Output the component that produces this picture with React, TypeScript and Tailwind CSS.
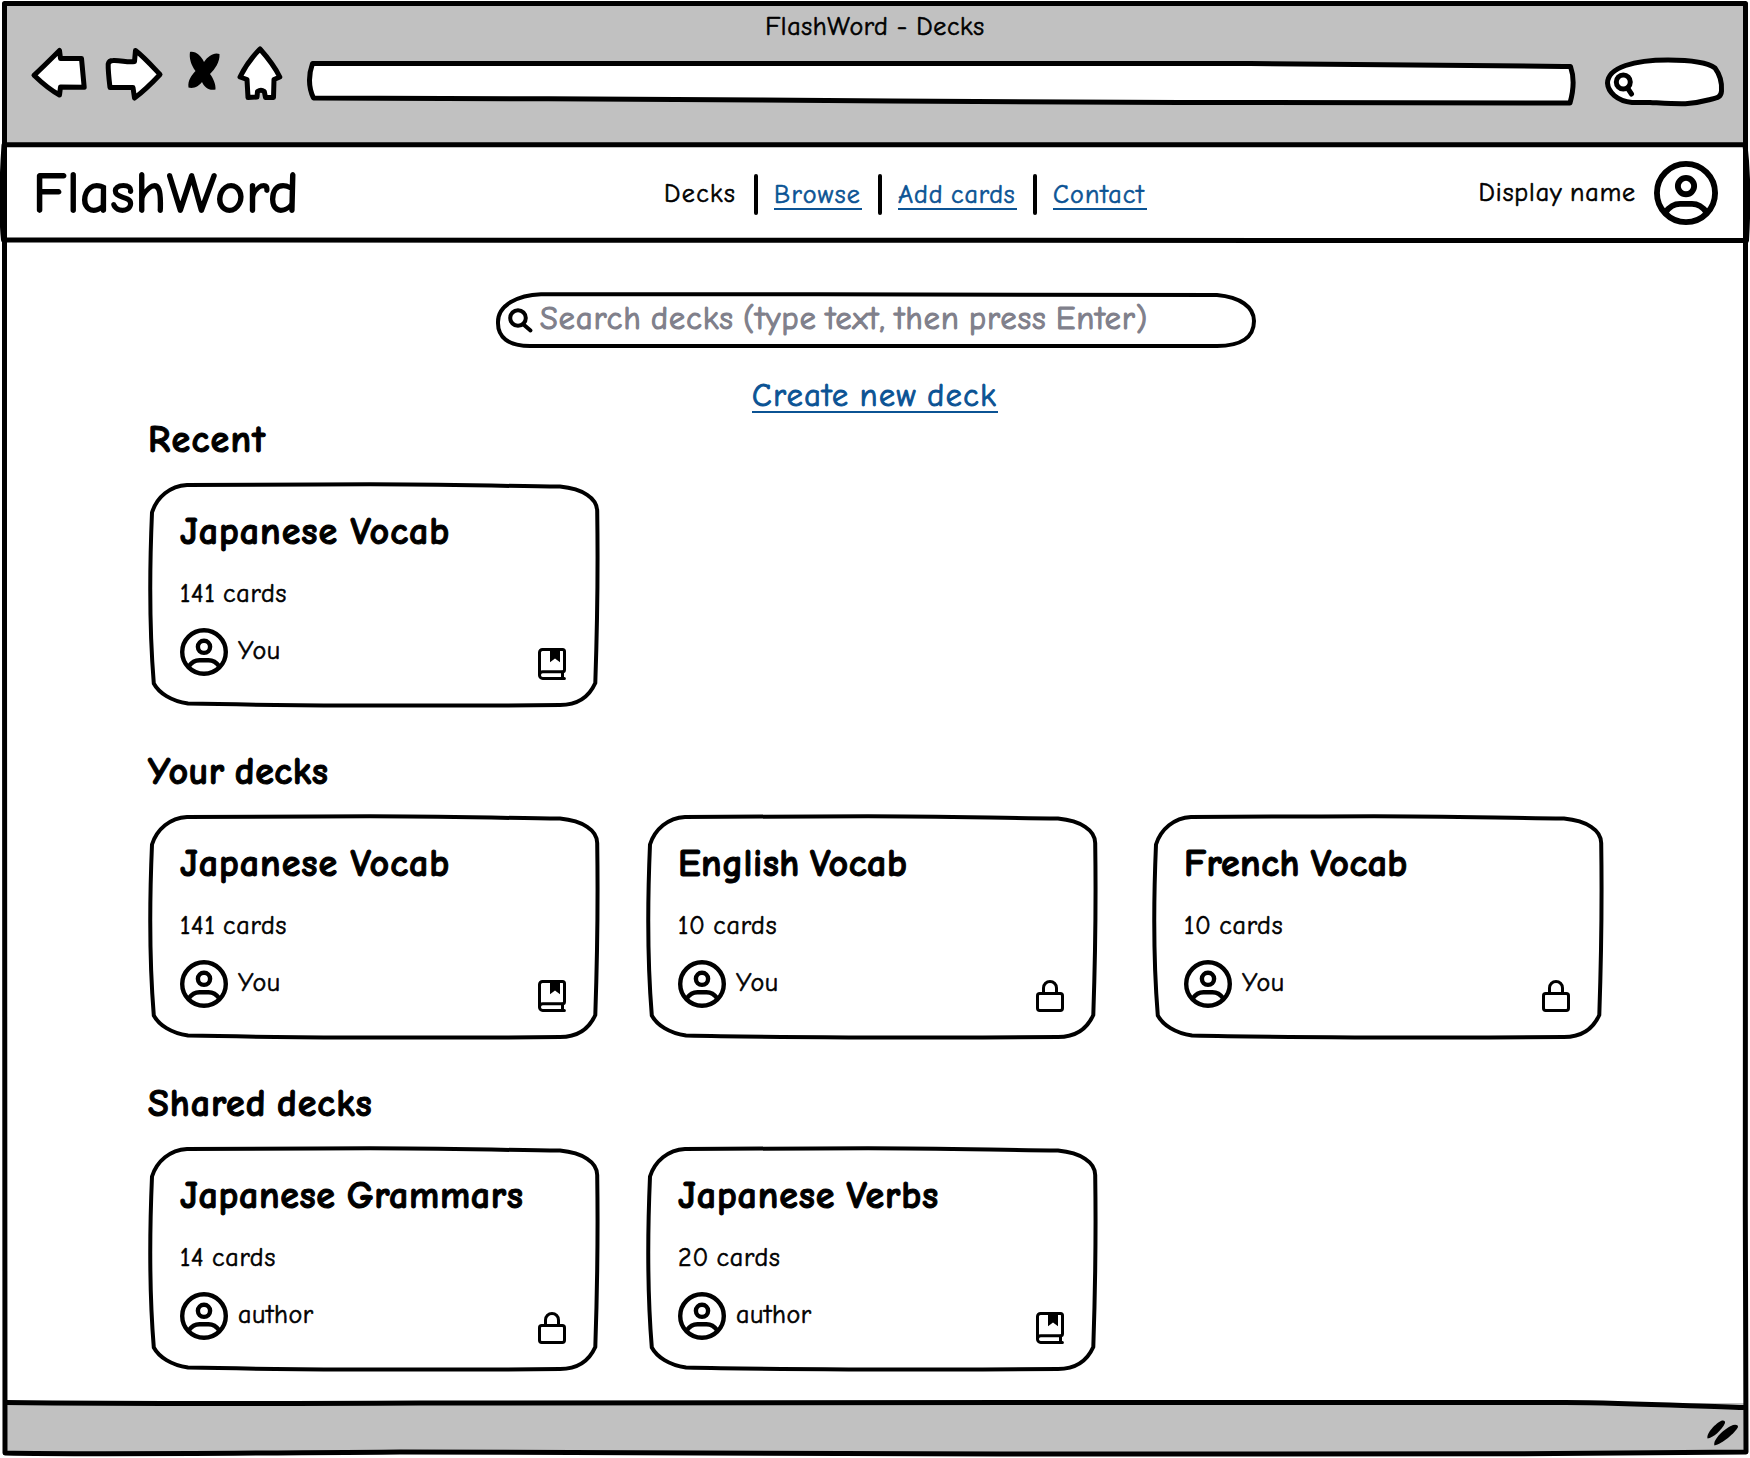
import React from "react";

type Privacy = "public" | "private";

interface Deck {
  title: string;
  spacing: string;
  cards: string;
  owner: string;
  privacy: Privacy;
}

const japanese: Deck = {
  title: "Japanese Vocab",
  spacing: "tracking-[0.95px] [word-spacing:-2px]",
  cards: "141 cards",
  owner: "You",
  privacy: "public",
};

const sections: { heading: string; spacing: string; decks: Deck[] }[] = [
  { heading: "Recent", spacing: "tracking-[1.3px]", decks: [japanese] },
  {
    heading: "Your decks",
    spacing: "tracking-[0.55px] [word-spacing:-4px]",
    decks: [
      japanese,
      { title: "English Vocab", spacing: "tracking-[0.5px] [word-spacing:-4px]", cards: "10 cards", owner: "You", privacy: "private" },
      { title: "French Vocab", spacing: "tracking-[0.4px] [word-spacing:-3px]", cards: "10 cards", owner: "You", privacy: "private" },
    ],
  },
  {
    heading: "Shared decks",
    spacing: "tracking-[0.95px] [word-spacing:-4px]",
    decks: [
      { title: "Japanese Grammars", spacing: "tracking-[0.65px] [word-spacing:-3px]", cards: "14 cards", owner: "author", privacy: "private" },
      { title: "Japanese Verbs", spacing: "tracking-[0.85px] [word-spacing:-3px]", cards: "20 cards", owner: "author", privacy: "public" },
    ],
  },
];

function Avatar({ className }: { className: string }) {
  return (
    <svg viewBox="0 0 48 48" className={className} fill="none" stroke="black" strokeWidth="4.4">
      <circle cx="24" cy="24" r="21.8" />
      <circle cx="24" cy="18.8" r="6.1" />
      <path d="M8.6 38.6C11.5 34.4 15 32.2 19.5 32.2h9C33 32.2 36.5 34.4 39.4 38.6" />
    </svg>
  );
}

function BookIcon() {
  return (
    <svg viewBox="0 0 28 32" className="h-8 w-7" fill="none" stroke="black" strokeWidth="3" strokeLinejoin="round" strokeLinecap="round">
      <path d="M26.4 30.5H4.7A3.2 3.2 0 0 1 1.5 27.3V4.5a3 3 0 0 1 3-3h20a2 2 0 0 1 2 2v18.200a2 2 0 0 1-2 2H4.7a3.2 3.2 0 0 0-3.2 3.2" />
      <path d="M24.5 24v6" />
      <path d="M12 1h10v13.2l-5-3.7-5 3.7z" fill="black" stroke="none" />
    </svg>
  );
}

function LockIcon() {
  return (
    <svg viewBox="0 0 28 32" className="h-8 w-7" fill="none" stroke="black" strokeWidth="3">
      <rect x="1.5" y="13.5" width="25" height="17" rx="2.2" />
      <path d="M7.5 13V8a6.5 6.5 0 0 1 13 0v5" />
    </svg>
  );
}

function DeckCard({ deck }: { deck: Deck }) {
  return (
    <article className="relative h-[228px] w-[452px] pt-8 pr-[34px] pl-8">
      <svg viewBox="148 480 452 228" className="absolute inset-0 h-full w-full" fill="none" stroke="black" strokeWidth="4" strokeLinejoin="round">
        <path d="M187 485C260 485 310 484.2 370 484.2C440 484.2 500 486 560 486.6C583 489 597 498 597.2 511C597.8 550 597.8 610 595.3 683C589 697 577 705 560 705C500 705.6 430 706 375 705.6C310 705.2 250 705 188 703.6C171 701 159 693 153.8 683.5C149 625 149.5 570 152 512.5C157 497 170 486 187 485Z" />
      </svg>
      <h3 className={`h-10 text-[38px] leading-10 font-bold whitespace-nowrap [-webkit-text-stroke-width:1px] ${deck.spacing}`}>{deck.title}</h3>
      <p className="mt-[27px] h-[30px] text-[26px] leading-[30px] tracking-[0.8px] [-webkit-text-stroke-width:0.6px] [word-spacing:-2px]">{deck.cards}</p>
      <div className="mt-[19px] flex items-start">
        <Avatar className="h-12 w-12" />
        <span className="ml-2.5 text-[26px] leading-[47px] tracking-[0.6px] [-webkit-text-stroke-width:0.6px]">{deck.owner}</span>
        <span className="mt-5 ml-auto">{deck.privacy === "public" ? <BookIcon /> : <LockIcon />}</span>
      </div>
    </article>
  );
}

function Toolbar() {
  return (
    <svg viewBox="0 0 1741 64" className="h-16 w-[1741px]" fill="white" stroke="black" strokeWidth="5" strokeLinejoin="round" strokeLinecap="round">
      <g transform="translate(-4 -44)">
        <path d="M34 75.3C43 67 51 59 59.5 50.5L60.5 58.5L81.5 58.5L84.2 87.3L60.5 87L59.5 95C50 90 42 83 34 75.3Z" />
        <path d="M113 60.5C121 60 128 63 134.5 61.5L135.5 50.5C144 57 152 66 160 74.500C152 83 144 91 134.5 98L133 87.5L110 87.5C109 79 108 71 108.2 64Q109 60.5 113 60.5Z" />
        <path
          d="M190 52C196 51 201 56 204 62C208 56 214 52 219.5 54C220 62 215 69 210 74C213 78 216 84 215.5 89.5C209 91 204 87 202 82C199 86 194 89 188.500 87.5C187.5 80 192 75 195.5 71C191 65 189 58 190 52Z"
          fill="black"
          stroke="none"
        />
        <path d="M260 49C252 57 245 67 240 77L247 79.5L248 97.5L257 97L257.500 91.5Q261 89 264.3 91.5L265.5 97.5L273.5 97.5L274 79.5L279.8 77C275 67 268 58 260 49Z" />
        <path d="M312.5 63.5C600 63 900 63.5 1250 63.5C1370 64 1470 66 1570.5 66.5Q1576 82 1570 103C1420 103 1300 102.5 1180 102.5C1000 102 900 101 760 100C620 98.8 450 98.5 313.5 98Q306 82 312.5 63.5Z" />
        <path d="M1607.5 83C1608 67 1635 60 1668 60C1690 60 1707 62 1715 68C1721 76 1722 84 1721.5 91C1721 98 1716 98 1708 100C1690 105 1680 104 1650 102.5L1632 102.5C1617 101 1608 92 1607.5 83Z" />
        <circle cx="1623.3" cy="82" r="7" />
        <path d="M1627.5 88L1631.5 94" />
      </g>
    </svg>
  );
}

function WindowFrame() {
  return (
    <svg viewBox="0 0 1750 1458" className="pointer-events-none absolute inset-0 h-full w-full" fill="none" stroke="black" strokeWidth="5" strokeLinejoin="round">
      <path d="M4.5 3.5H1745.5V700C1746 1000 1744.5 1200 1746 1452C1500 1455 1300 1454 1000 1454C700 1453 500 1452 400 1452C250 1453 100 1455 5 1453C4 1200 4.5 900 4.5 600Z" />
      <path d="M4 144.8H1745C1748.500 175 1748 215 1746.5 240.5C1200 240 600 240.5 3.5 240C0.500 210 2 175 4 144.8Z" />
      <path d="M5 1402.5C150 1404 300 1403.5 420 1403C700 1402.5 1200 1402.5 1565 1402.5C1630 1403 1690 1406 1744 1407.5" />
    </svg>
  );
}

const links = [
  { label: "Browse", className: "w-[88px] tracking-[1.4px]" },
  { label: "Add cards", className: "w-[119px] tracking-[0.9px] [word-spacing:-2px]" },
  { label: "Contact", className: "w-[94px] tracking-[1.1px]" },
];

export default function App() {
  return (
    <div className="relative flex h-[1458px] w-[1750px] flex-col overflow-hidden bg-white px-[4px] pt-[3px] pb-[4px] font-['Comic_Neue',cursive] text-black">
      <header className="h-[141px] bg-[#c1c1c1]">
        <h1 className="h-[41px] text-center text-[26px] leading-[49px] tracking-[0.65px] [-webkit-text-stroke-width:0.6px] [word-spacing:-1px]">FlashWord - Decks</h1>
        <Toolbar />
      </header>

      <div className="flex h-[97px] items-center pr-[28px] pl-[29px]">
        <div className="w-[631px] pt-[3px] text-[57px] leading-[60px] tracking-[1px] [-webkit-text-stroke-width:1.8px]">FlashWord</div>
        <nav className="flex items-center pt-[3px] text-[26px] leading-[30px] [-webkit-text-stroke-width:0.6px]">
          <span className="w-[74px] tracking-[1.4px]">Decks</span>
          {links.map((l) => (
            <React.Fragment key={l.label}>
              <span className="mx-4 h-[41px] w-1 rounded-full bg-black" />
              <a className="whitespace-nowrap text-[#0b5394]">
                <span className={`mt-0.5 block h-[29px] border-b-2 border-[#0b5394] leading-[29px] ${l.className}`}>{l.label}</span>
              </a>
            </React.Fragment>
          ))}
        </nav>
        <div className="ml-auto flex items-center gap-[18px] pt-px">
          <span className="text-[26px] leading-[30px] tracking-[0.9px] [-webkit-text-stroke-width:0.6px] [word-spacing:-2px]">Display name</span>
          <Avatar className="h-16 w-16" />
        </div>
      </div>

      <main className="flex flex-1 flex-col pl-[144px]">
        <div className="relative mt-[51px] ml-[346px] flex h-14 w-[764px] items-center">
          <svg viewBox="494 292 764 56" className="absolute inset-0 h-full w-full" fill="none" stroke="black" strokeWidth="4" strokeLinejoin="round">
            <path d="M541 294.2C770 293.5 980 295.5 1217 295C1240 297 1254 307 1254 321C1254 338 1240 346 1217 346H530C508 346 497.5 337 498 322C498 305 518 295 541 294.2Z" />
            <circle cx="518" cy="318" r="7.8" />
            <path d="M523.5 324.5L530.5 330.5" strokeLinecap="round" />
          </svg>
          <span className="pb-0.5 pl-[46px] text-[32px] leading-[40px] tracking-[1.2px] whitespace-nowrap text-[#80808b] [-webkit-text-stroke-width:1.2px] [word-spacing:-2.7px]">
            Search decks (type text, then press Enter)
          </span>
        </div>
        <a className="mt-8 ml-[604px] w-[246px] border-b-2 border-[#0b5394] text-[32px] leading-[31px] tracking-[1.5px] whitespace-nowrap text-[#0b5394] [-webkit-text-stroke-width:1px] [word-spacing:-2px]">
          Create new deck
        </a>

        <div className="mt-[7px] flex flex-col gap-11">
          {sections.map((s) => (
            <section key={s.heading} className="flex flex-col gap-5">
              <h2 className={`h-10 text-[38px] leading-10 font-bold [-webkit-text-stroke-width:1px] ${s.spacing}`}>{s.heading}</h2>
              <div className="flex">
                {s.decks.map((d, i) => (
                  <div key={d.title} className={i === 1 ? "ml-[46px]" : i === 2 ? "ml-[54px]" : ""}>
                    <DeckCard deck={d} />
                  </div>
                ))}
              </div>
            </section>
          ))}
        </div>
      </main>

      <footer className="flex h-[51px] items-start justify-end bg-[#c1c1c1]">
        <svg viewBox="1700 1403 46 48" className="h-12 w-[46px]">
          <path d="M1707.5 1438.5C1706 1433 1716 1423 1722 1420.5Q1725.5 1420 1725 1423C1722 1430 1713 1438 1707.5 1438.5Z" />
          <path d="M1714.5 1445.5C1712 1440 1725 1428 1733 1425Q1738 1424 1738 1427C1735 1433 1722 1444 1714.5 1445.5Z" />
        </svg>
      </footer>
      <WindowFrame />
    </div>
  );
}
